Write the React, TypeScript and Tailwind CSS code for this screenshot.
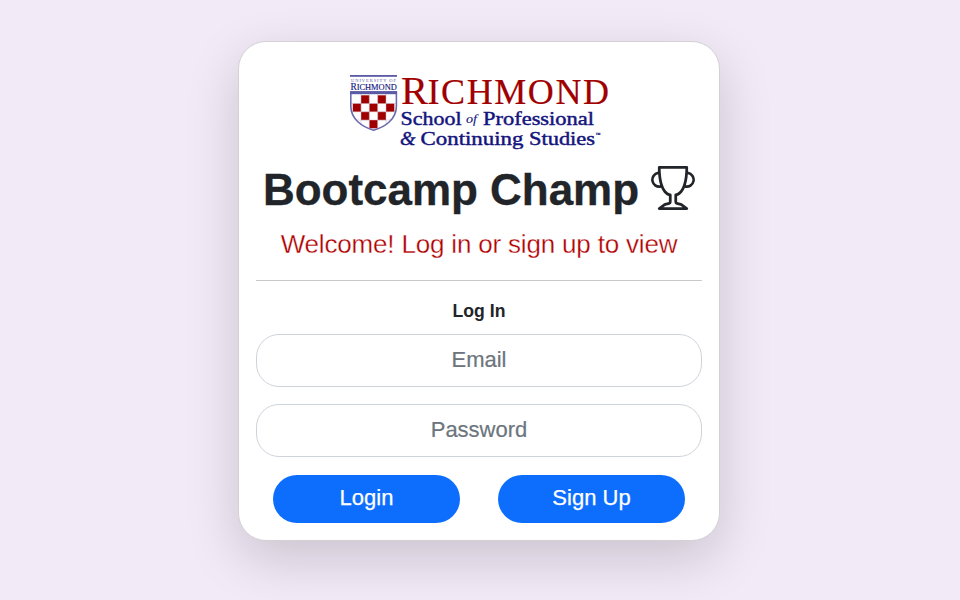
import React from "react";
import { BsTrophy } from "react-icons/bs";

const checks: [number, number][] = [
  [361, 95.3], [377.7, 95.3],
  [352.8, 103.5], [369.3, 103.5], [386, 103.5],
  [361, 111.8], [377.7, 111.8],
  [369.3, 120],
];

function Logo() {
  const navy = "#14147d";
  const red = "#a00000";
  const shield = "M350.8 92 V106 C350.8 119 362 127 373.6 130.3 C385.5 127 396.4 119 396.4 106 V92 Z";
  return (
    <svg className="block h-[82px] w-[270px]" viewBox="344 70 270 82" fontFamily="'Liberation Serif', serif">
      <clipPath id="shield"><path d={shield} /></clipPath>
      <rect x="350" y="75" width="47" height="1.8" fill="#5a5aa5" />
      <text x="351" y="81.6" fontSize="4.6" fill="#5c5ca4" textLength="45" lengthAdjust="spacing">UNIVERSITY OF</text>
      <text x="350.4" y="89.8" fontSize="9.5" fill={navy} stroke={navy} strokeWidth="0.15" textLength="46.4" lengthAdjust="spacingAndGlyphs">
        R<tspan fontSize="8.5">ICHMOND</tspan>
      </text>
      <g clipPath="url(#shield)">
        {checks.map(([x, y]) => (
          <rect key={`${x}-${y}`} x={x} y={y} width="8.3" height="8.3" fill={red} />
        ))}
        <path d="M361 94V126M369.3 94V130M377.7 94V130M386 94V126M351 103.5H397M351 111.8H397M351 120H397" stroke="#c9b6c4" strokeWidth="0.5" />
      </g>
      <path d={shield} fill="none" stroke="#6a6aae" strokeWidth="1.6" />
      <rect x="350" y="91.2" width="47" height="3" fill="#5a5aa5" />
      <g fill={red} stroke={red} strokeWidth="0.2">
        <text x="401" y="104.3" fontSize="41" textLength="27" lengthAdjust="spacingAndGlyphs">R</text>
        <text x="427.5" y="104.3" fontSize="36" textLength="181.5" lengthAdjust="spacing">ICHMOND</text>
      </g>
      <g fill={navy} stroke={navy} strokeWidth="0.45" fontSize="19">
        <text x="400.5" y="124.5" textLength="61" lengthAdjust="spacingAndGlyphs">School</text>
        <text x="466" y="123" fontSize="13.5" fontStyle="italic" strokeWidth="0.1" textLength="11" lengthAdjust="spacingAndGlyphs">of</text>
        <text x="483" y="124.5" textLength="111" lengthAdjust="spacingAndGlyphs">Professional</text>
        <text x="400" y="144.5" fontStyle="italic" textLength="15.5" lengthAdjust="spacingAndGlyphs">&amp;</text>
        <text x="420.5" y="144.5" textLength="103" lengthAdjust="spacingAndGlyphs">Continuing</text>
        <text x="529" y="144.5" textLength="66" lengthAdjust="spacingAndGlyphs">Studies</text>
        <text x="595.5" y="136" fontSize="5" strokeWidth="0.2" textLength="5">™</text>
      </g>
    </svg>
  );
}

const field =
  "block h-[53px] w-full rounded-[23px] border border-[#ced4da] bg-white pb-[1px] text-center text-[22px] text-[#212529] outline-none [-webkit-text-stroke:0.2px] placeholder:text-[#6c757d]";
const button =
  "h-[48px] w-[187px] rounded-full bg-[#0d6efd] pb-[2px] text-[22px] leading-none text-white [-webkit-text-stroke:0.25px]";

export default function App() {
  return (
    <main className="flex h-[600px] w-[960px] items-start overflow-hidden bg-[#f2eaf7] pt-[41px] pl-[238px] font-['Liberation_Sans',Arial,sans-serif] text-[#212529]">
      <section className="flex h-[500px] w-[482px] flex-col items-center rounded-[28px] border border-[#d3d0d6] bg-white px-[17px] pt-[28px] shadow-[0_18px_53px_rgba(0,0,0,0.165)]">
        <Logo />
        <h1 className="mt-[11px] flex h-[52px] items-center gap-[12px] text-[44px] leading-[52px] font-bold whitespace-nowrap">
          <span className="pt-[2px] tracking-[-0.03px] [-webkit-text-stroke:0.3px]">Bootcamp Champ</span>
          <BsTrophy className="mb-[3px] size-[44px]" />
        </h1>
        <p className="mt-[12px] text-[26px] leading-[34px] tracking-[-0.18px] whitespace-nowrap text-[#b00000] [-webkit-text-stroke:0.3px_white]">
          Welcome! Log in or sign up to view
        </p>
        <hr className="mt-[19px] h-px w-full border-0 bg-[#c7c8ca]" />
        <form className="flex w-full flex-col" onSubmit={(e) => e.preventDefault()}>
          <label className="mt-[19px] text-center text-[17.6px] leading-[22px] font-bold">Log In</label>
          <input className={`${field} mt-[12px]`} type="email" placeholder="Email" />
          <input className={`${field} mt-[17px]`} type="password" placeholder="Password" />
          <div className="mt-[18px] flex justify-between px-[17px]">
            <button className={button}>Login</button>
            <button className={button}>Sign Up</button>
          </div>
        </form>
      </section>
    </main>
  );
}
